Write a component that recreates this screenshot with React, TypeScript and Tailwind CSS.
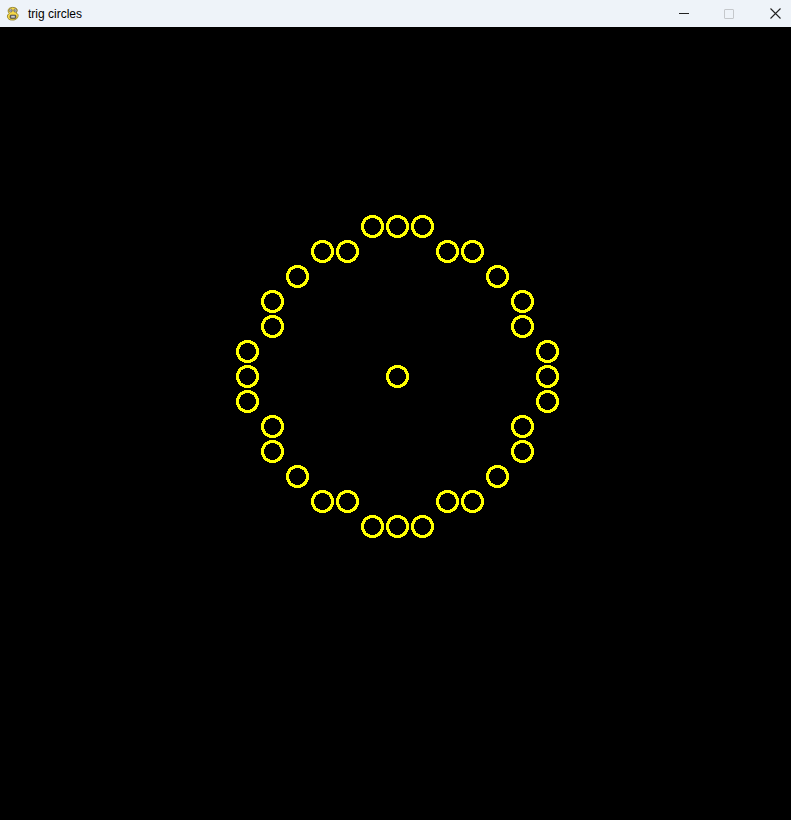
const GRID = 25;

// grid offsets from the middle circle, in cells
const ring: [number, number][] = [
  [-1, -6], [0, -6], [1, -6],
  [-3, -5], [-2, -5], [2, -5], [3, -5],
  [-4, -4], [4, -4],
  [-5, -3], [5, -3],
  [-5, -2], [5, -2],
  [-6, -1], [6, -1],
  [-6, 0], [6, 0],
  [-6, 1], [6, 1],
  [-5, 2], [5, 2],
  [-5, 3], [5, 3],
  [-4, 4], [4, 4],
  [-3, 5], [-2, 5], [2, 5], [3, 5],
  [-1, 6], [0, 6], [1, 6],
  [0, 0],
];

function PygameIcon() {
  return (
    <svg width="16" height="16" viewBox="0 0 16 16">
      <path
        d="M4 2.5c1.5-1.5 6-1.5 7.5 0 1.2 1.2 0.8 3.5-0.5 4.5 1.8 0.5 2.5 2 2 3.5-0.5 2-2 3-4 3.5H6.5c-2 0-3.5-1-4-2.8-0.4-1.6 0.3-3 1.8-3.7C2.8 6.5 2.8 3.7 4 2.5z"
        fill="#f6d84a"
        stroke="#8a7a1a"
        strokeWidth="0.8"
      />
      <circle cx="5.8" cy="4.5" r="1.5" fill="#fff" stroke="#333" strokeWidth="0.6" />
      <circle cx="10.2" cy="4.5" r="1.5" fill="#fff" stroke="#333" strokeWidth="0.6" />
      <circle cx="6" cy="4.7" r="0.6" fill="#222" />
      <circle cx="10" cy="4.7" r="0.6" fill="#222" />
      <rect x="5" y="9" width="6" height="3.5" rx="1" fill="#666" stroke="#333" strokeWidth="0.5" />
      <rect x="6.2" y="9.8" width="3.6" height="1.8" fill="#ccc" />
    </svg>
  );
}

export default function App() {
  const cx = 397;
  const cy = 349;

  return (
    <div className="flex h-[820px] w-[791px] flex-col overflow-hidden bg-black">
      <div className="flex h-[27px] shrink-0 items-center bg-[#eef3f9] font-['Liberation_Sans',sans-serif] text-[12px] text-black">
        <div className="flex items-center pl-[5px]">
          <PygameIcon />
          <span className="ml-[7px] leading-none">trig circles</span>
        </div>
        <div className="ml-auto flex h-full items-center gap-[35px] pr-[10px]">
          <div className="h-px w-[10px] bg-[#222]" />
          <div className="h-[10px] w-[10px] rounded-[1px] border border-[#c5c8cc]" />
          <svg width="11" height="11" viewBox="0 0 11 11" className="ml-px">
            <path d="M0.5 0.5L10.5 10.5M10.5 0.5L0.5 10.5" stroke="#222" strokeWidth="1.1" />
          </svg>
        </div>
      </div>
      <div className="flex-1">
        <svg width="791" height="793" viewBox="0 0 791 793" shapeRendering="crispEdges">
          {ring.map(([dx, dy]) => (
            <circle
              key={`${dx},${dy}`}
              cx={cx + dx * GRID + 0.5}
              cy={cy + dy * GRID + 0.5}
              r={10}
              fill="none"
              stroke="#ffff00"
              strokeWidth={3}
            />
          ))}
        </svg>
      </div>
    </div>
  );
}
